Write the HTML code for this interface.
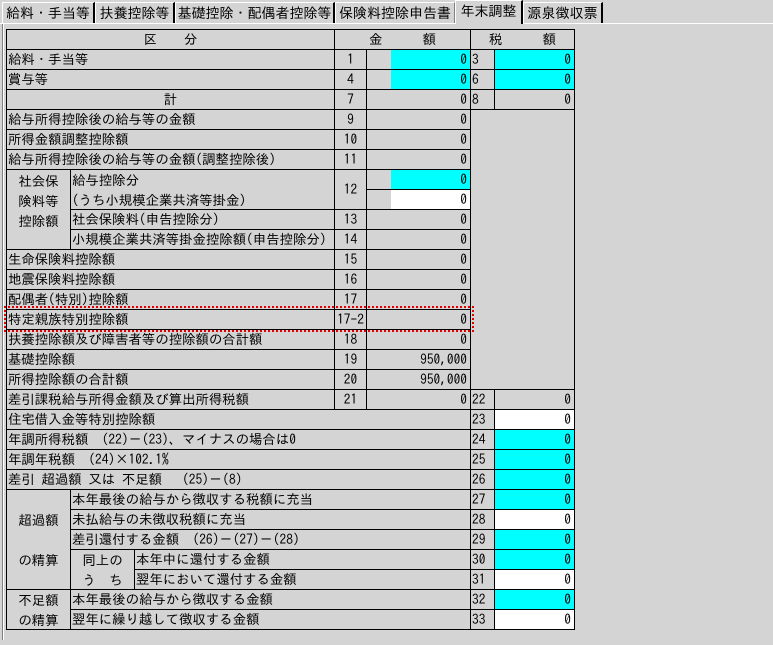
<!DOCTYPE html><html><head><meta charset="utf-8"><style>
body{margin:0;width:773px;height:645px;background:#d4d4d4;position:relative;overflow:hidden;font-family:"IPAGothic","Noto Sans CJK JP",monospace;font-size:13.4px;color:#000}
.c{position:absolute;box-sizing:border-box;border:1px solid #000;line-height:18px;white-space:nowrap;overflow:hidden;padding-left:1px}
.n{text-align:center;padding-left:0}
.v{text-align:right;padding-right:3px}
.cy{background:#00ffff}.w{background:#fff}
.tab{position:absolute;top:2px;height:21px;box-sizing:border-box;border-top:1px solid #fff;border-left:1px solid #fff;border-right:2px solid #000;line-height:20px;font-size:14px;text-align:center}
.f{position:absolute;box-sizing:border-box;border:none}
</style></head><body>
<div style="position:absolute;left:0;top:23px;width:773px;height:1px;background:#fff"></div>
<div style="position:absolute;left:2px;top:24px;width:1px;height:616px;background:#808080"></div>
<div style="position:absolute;left:3px;top:24px;width:1px;height:616px;background:#fff"></div>
<div class="tab" style="left:2px;width:93px">給料・手当等</div>
<div class="tab" style="left:95px;width:80px">扶養控除等</div>
<div class="tab" style="left:175px;width:160px">基礎控除・配偶者控除等</div>
<div class="tab" style="left:335px;width:120px;border-right:1px solid #808080">保険料控除申告書</div>
<div class="tab" style="left:455px;top:0;height:24px;width:68px;background:#d4d4d4">年末調整</div>
<div class="tab" style="left:523px;width:80px">源泉徴収票</div>

<div class="c n" style="left:6px;top:29px;width:329px;height:21px">区　　分</div>
<div class="c n" style="left:334px;top:29px;width:137px;height:21px">金　　　額</div>
<div class="c n" style="left:470px;top:29px;width:105px;height:21px">税　　　額</div>

<div class="c" style="left:6px;top:49px;width:329px;height:21px">給料・手当等</div>
<div class="c n" style="left:334px;top:49px;width:33px;height:21px">1</div>
<div class="c" style="left:366px;top:49px;width:105px;height:21px"></div>
<div class="f cy v" style="left:391px;top:50px;width:79px;height:19px;line-height:19px">0</div>
<div class="c" style="left:470px;top:49px;width:25px;height:21px">3</div>
<div class="c cy v" style="left:494px;top:49px;width:81px;height:21px">0</div>

<div class="c" style="left:6px;top:69px;width:329px;height:21px">賞与等</div>
<div class="c n" style="left:334px;top:69px;width:33px;height:21px">4</div>
<div class="c" style="left:366px;top:69px;width:105px;height:21px"></div>
<div class="f cy v" style="left:391px;top:70px;width:79px;height:19px;line-height:19px">0</div>
<div class="c" style="left:470px;top:69px;width:25px;height:21px">6</div>
<div class="c cy v" style="left:494px;top:69px;width:81px;height:21px">0</div>

<div class="c n" style="left:6px;top:89px;width:329px;height:21px">計</div>
<div class="c n" style="left:334px;top:89px;width:33px;height:21px">7</div>
<div class="c v" style="left:366px;top:89px;width:105px;height:21px">0</div>
<div class="c" style="left:470px;top:89px;width:25px;height:21px">8</div>
<div class="c v" style="left:494px;top:89px;width:81px;height:21px">0</div>

<div class="c" style="left:470px;top:109px;width:105px;height:281px"></div>

<div class="c" style="left:6px;top:109px;width:329px;height:21px">給与所得控除後の給与等の金額</div>
<div class="c n" style="left:334px;top:109px;width:33px;height:21px">9</div>
<div class="c v" style="left:366px;top:109px;width:105px;height:21px">0</div>
<div class="c" style="left:6px;top:129px;width:329px;height:21px">所得金額調整控除額</div>
<div class="c n" style="left:334px;top:129px;width:33px;height:21px">10</div>
<div class="c v" style="left:366px;top:129px;width:105px;height:21px">0</div>
<div class="c" style="left:6px;top:149px;width:329px;height:21px">給与所得控除後の給与等の金額(調整控除後)</div>
<div class="c n" style="left:334px;top:149px;width:33px;height:21px">11</div>
<div class="c v" style="left:366px;top:149px;width:105px;height:21px">0</div>

<div class="c n" style="left:6px;top:169px;width:65px;height:81px;line-height:20px;padding-top:1px">社会保<br>険料等<br>控除額</div>
<div class="c" style="left:70px;top:169px;width:265px;height:41px;line-height:20px">給与控除分<br>(うち小規模企業共済等掛金)</div>
<div class="c n" style="left:334px;top:169px;width:33px;height:41px;line-height:38px">12</div>
<div class="c" style="left:366px;top:169px;width:105px;height:21px"></div>
<div class="f cy v" style="left:391px;top:170px;width:79px;height:19px;line-height:19px">0</div>
<div class="c" style="left:366px;top:189px;width:105px;height:21px"></div>
<div class="f w v" style="left:391px;top:190px;width:79px;height:19px;line-height:19px">0</div>
<div class="c" style="left:70px;top:209px;width:265px;height:21px">社会保険料(申告控除分)</div>
<div class="c n" style="left:334px;top:209px;width:33px;height:21px">13</div>
<div class="c v" style="left:366px;top:209px;width:105px;height:21px">0</div>
<div class="c" style="left:70px;top:229px;width:265px;height:21px">小規模企業共済等掛金控除額(申告控除分)</div>
<div class="c n" style="left:334px;top:229px;width:33px;height:21px">14</div>
<div class="c v" style="left:366px;top:229px;width:105px;height:21px">0</div>

<div class="c" style="left:6px;top:249px;width:329px;height:21px">生命保険料控除額</div>
<div class="c n" style="left:334px;top:249px;width:33px;height:21px">15</div>
<div class="c v" style="left:366px;top:249px;width:105px;height:21px">0</div>
<div class="c" style="left:6px;top:269px;width:329px;height:21px">地震保険料控除額</div>
<div class="c n" style="left:334px;top:269px;width:33px;height:21px">16</div>
<div class="c v" style="left:366px;top:269px;width:105px;height:21px">0</div>
<div class="c" style="left:6px;top:289px;width:329px;height:21px">配偶者(特別)控除額</div>
<div class="c n" style="left:334px;top:289px;width:33px;height:21px">17</div>
<div class="c v" style="left:366px;top:289px;width:105px;height:21px">0</div>
<div class="c" style="left:6px;top:309px;width:329px;height:21px">特定親族特別控除額</div>
<div class="c n" style="left:334px;top:309px;width:33px;height:21px">17-2</div>
<div class="c v" style="left:366px;top:309px;width:105px;height:21px">0</div>
<div class="c" style="left:6px;top:329px;width:329px;height:21px">扶養控除額及び障害者等の控除額の合計額</div>
<div class="c n" style="left:334px;top:329px;width:33px;height:21px">18</div>
<div class="c v" style="left:366px;top:329px;width:105px;height:21px">0</div>
<div class="c" style="left:6px;top:349px;width:329px;height:21px">基礎控除額</div>
<div class="c n" style="left:334px;top:349px;width:33px;height:21px">19</div>
<div class="c v" style="left:366px;top:349px;width:105px;height:21px">950,000</div>
<div class="c" style="left:6px;top:369px;width:329px;height:21px">所得控除額の合計額</div>
<div class="c n" style="left:334px;top:369px;width:33px;height:21px">20</div>
<div class="c v" style="left:366px;top:369px;width:105px;height:21px">950,000</div>

<div style="position:absolute;left:4px;top:306px;width:466px;height:22px;border:2px dotted #e00000"></div>

<div class="c" style="left:6px;top:389px;width:329px;height:21px">差引課税給与所得金額及び算出所得税額</div>
<div class="c n" style="left:334px;top:389px;width:33px;height:21px">21</div>
<div class="c v" style="left:366px;top:389px;width:105px;height:21px">0</div>
<div class="c" style="left:470px;top:389px;width:25px;height:21px">22</div>
<div class="c v" style="left:494px;top:389px;width:81px;height:21px">0</div>

<div class="c" style="left:6px;top:409px;width:465px;height:21px">住宅借入金等特別控除額</div>
<div class="c" style="left:470px;top:409px;width:25px;height:21px">23</div>
<div class="c v w" style="left:494px;top:409px;width:81px;height:21px">0</div>
<div class="c" style="left:6px;top:429px;width:465px;height:21px">年調所得税額　(22)－(23)、マイナスの場合は0</div>
<div class="c" style="left:470px;top:429px;width:25px;height:21px">24</div>
<div class="c v cy" style="left:494px;top:429px;width:81px;height:21px">0</div>
<div class="c" style="left:6px;top:449px;width:465px;height:21px">年調年税額　(24)×102.1%</div>
<div class="c" style="left:470px;top:449px;width:25px;height:21px">25</div>
<div class="c v cy" style="left:494px;top:449px;width:81px;height:21px">0</div>
<div class="c" style="left:6px;top:469px;width:465px;height:21px">差引 超過額 又は 不足額　 (25)－(8)</div>
<div class="c" style="left:470px;top:469px;width:25px;height:21px">26</div>
<div class="c v cy" style="left:494px;top:469px;width:81px;height:21px">0</div>

<div class="c n" style="left:6px;top:489px;width:65px;height:101px;padding-top:10px;line-height:40px">超過額<br>の精算</div>
<div class="c" style="left:70px;top:489px;width:401px;height:21px">本年最後の給与から徴収する税額に充当</div>
<div class="c" style="left:470px;top:489px;width:25px;height:21px">27</div>
<div class="c v cy" style="left:494px;top:489px;width:81px;height:21px">0</div>
<div class="c" style="left:70px;top:509px;width:401px;height:21px">未払給与の未徴収税額に充当</div>
<div class="c" style="left:470px;top:509px;width:25px;height:21px">28</div>
<div class="c v w" style="left:494px;top:509px;width:81px;height:21px">0</div>
<div class="c" style="left:70px;top:529px;width:401px;height:21px">差引還付する金額　(26)－(27)－(28)</div>
<div class="c" style="left:470px;top:529px;width:25px;height:21px">29</div>
<div class="c v cy" style="left:494px;top:529px;width:81px;height:21px">0</div>
<div class="c n" style="left:70px;top:549px;width:65px;height:41px;line-height:20px">同上の<br>う　ち</div>
<div class="c" style="left:134px;top:549px;width:337px;height:21px">本年中に還付する金額</div>
<div class="c" style="left:470px;top:549px;width:25px;height:21px">30</div>
<div class="c v cy" style="left:494px;top:549px;width:81px;height:21px">0</div>
<div class="c" style="left:134px;top:569px;width:337px;height:21px">翌年において還付する金額</div>
<div class="c" style="left:470px;top:569px;width:25px;height:21px">31</div>
<div class="c v w" style="left:494px;top:569px;width:81px;height:21px">0</div>

<div class="c n" style="left:6px;top:589px;width:65px;height:41px;line-height:20px">不足額<br>の精算</div>
<div class="c" style="left:70px;top:589px;width:401px;height:21px">本年最後の給与から徴収する金額</div>
<div class="c" style="left:470px;top:589px;width:25px;height:21px">32</div>
<div class="c v cy" style="left:494px;top:589px;width:81px;height:21px">0</div>
<div class="c" style="left:70px;top:609px;width:401px;height:21px">翌年に繰り越して徴収する金額</div>
<div class="c" style="left:470px;top:609px;width:25px;height:21px">33</div>
<div class="c v w" style="left:494px;top:609px;width:81px;height:21px">0</div>
</body></html>
